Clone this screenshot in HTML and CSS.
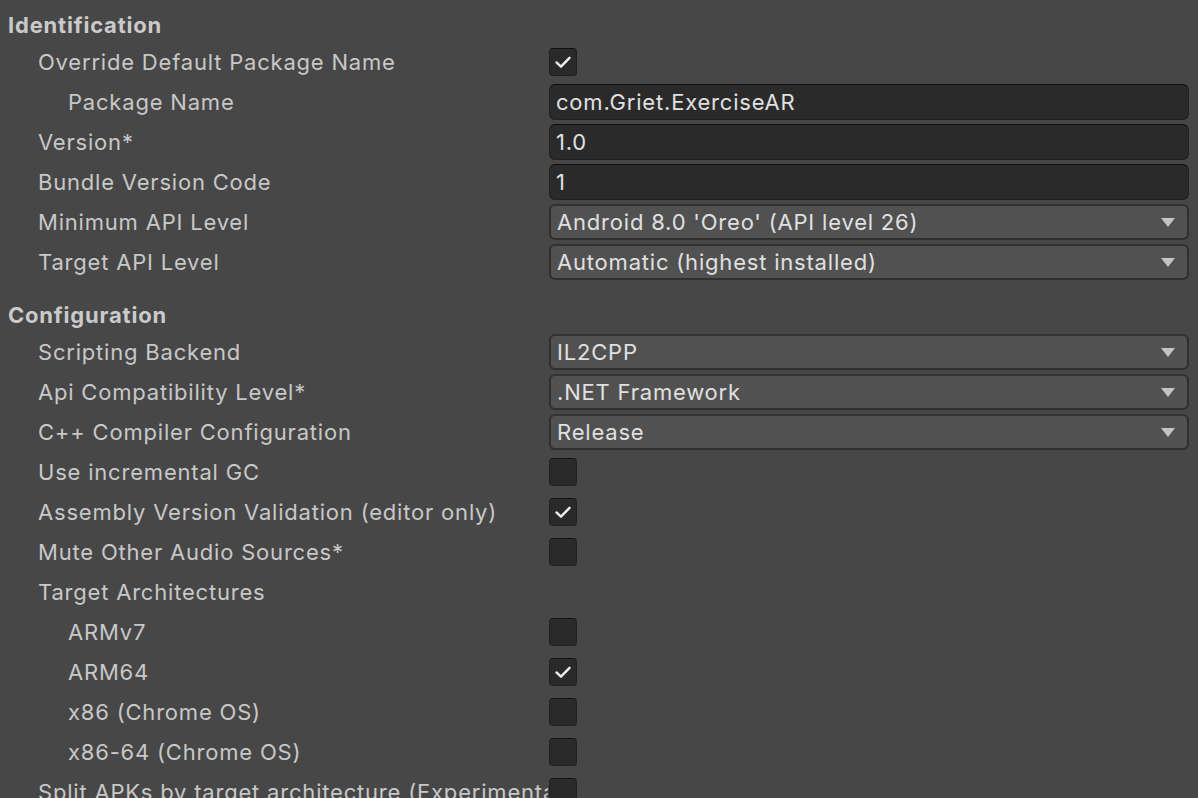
FILE: index.html
```html
<!DOCTYPE html>
<html>
<head>
<meta charset="utf-8">
<link rel="stylesheet" href="styles.css">
</head>
<body>
<div class="inspector">
  <section class="section">
    <div class="header">Identification</div>
    <div class="row"><div class="label l1">Override Default Package Name</div><div class="ctrl"><span class="cb on"><svg viewBox="0 0 28 28"><path d="M7 14.5 L11.8 19 L21 9.5"/></svg></span></div></div>
    <div class="row"><div class="label l2">Package Name</div><div class="ctrl"><div class="field">com.Griet.ExerciseAR</div></div></div>
    <div class="row"><div class="label l1">Version*</div><div class="ctrl"><div class="field">1.0</div></div></div>
    <div class="row"><div class="label l1">Bundle Version Code</div><div class="ctrl"><div class="field">1</div></div></div>
    <div class="row"><div class="label l1">Minimum API Level</div><div class="ctrl"><div class="dropdown"><span>Android 8.0 'Oreo' (API level 26)</span><i class="arrow"></i></div></div></div>
    <div class="row"><div class="label l1">Target API Level</div><div class="ctrl"><div class="dropdown"><span>Automatic (highest installed)</span><i class="arrow"></i></div></div></div>
  </section>
  <section class="section">
    <div class="header">Configuration</div>
    <div class="row"><div class="label l1">Scripting Backend</div><div class="ctrl"><div class="dropdown"><span>IL2CPP</span><i class="arrow"></i></div></div></div>
    <div class="row"><div class="label l1">Api Compatibility Level*</div><div class="ctrl"><div class="dropdown"><span>.NET Framework</span><i class="arrow"></i></div></div></div>
    <div class="row"><div class="label l1">C++ Compiler Configuration</div><div class="ctrl"><div class="dropdown"><span>Release</span><i class="arrow"></i></div></div></div>
    <div class="row"><div class="label l1">Use incremental GC</div><div class="ctrl"><span class="cb"></span></div></div>
    <div class="row"><div class="label l1">Assembly Version Validation (editor only)</div><div class="ctrl"><span class="cb on"><svg viewBox="0 0 28 28"><path d="M7 14.5 L11.8 19 L21 9.5"/></svg></span></div></div>
    <div class="row"><div class="label l1">Mute Other Audio Sources*</div><div class="ctrl"><span class="cb"></span></div></div>
    <div class="row"><div class="label l1">Target Architectures</div><div class="ctrl"></div></div>
    <div class="row"><div class="label l2">ARMv7</div><div class="ctrl"><span class="cb"></span></div></div>
    <div class="row"><div class="label l2">ARM64</div><div class="ctrl"><span class="cb on"><svg viewBox="0 0 28 28"><path d="M7 14.5 L11.8 19 L21 9.5"/></svg></span></div></div>
    <div class="row"><div class="label l2">x86 (Chrome OS)</div><div class="ctrl"><span class="cb"></span></div></div>
    <div class="row"><div class="label l2">x86-64 (Chrome OS)</div><div class="ctrl"><span class="cb"></span></div></div>
    <div class="row"><div class="label l1">Split APKs by target architecture (Experimental)</div><div class="ctrl"><span class="cb"></span></div></div>
  </section>
</div>
</body>
</html>
```

FILE: styles.css
```css
html, body {
  margin: 0;
  padding: 0;
  background: #474747;
  height: 100%;
  overflow: hidden;
}
body {
  font-family: Inter, "Noto Sans", sans-serif;
  font-size: 22px;
  letter-spacing: 0.8px;
  color: #c8c8c8;
}
.inspector {
  display: flex;
  flex-direction: column;
  gap: 16px;
  padding-top: 8px;
}
.section {
  display: flex;
  flex-direction: column;
}
.header {
  height: 34px;
  line-height: 34px;
  padding-left: 8px;
  font-weight: 700;
  letter-spacing: 0.8px;
  color: #cacaca;
}
.row {
  display: flex;
  align-items: center;
  height: 40px;
}
.label {
  width: 548px;
  flex: none;
  white-space: nowrap;
  overflow: hidden;
  box-sizing: border-box;
  line-height: 40px;
}
.l1 { padding-left: 38px; }
.l2 { padding-left: 68px; }
.ctrl {
  flex: 1;
  margin-left: 1px;
  margin-right: 9px;
  display: flex;
  align-items: center;
}
.field {
  flex: 1;
  height: 36px;
  box-sizing: border-box;
  background: #2a2a2a;
  border: 1px solid #212121;
  border-top-color: #0f0f0f;
  border-radius: 6px;
  padding-left: 6px;
  line-height: 34px;
  color: #e0e0e0;
}
.dropdown {
  flex: 1;
  height: 36px;
  box-sizing: border-box;
  background: #515151;
  border: 2px solid #2f2f2f;
  border-top-color: #333333;
  border-radius: 6px;
  padding-left: 6px;
  padding-right: 12px;
  display: flex;
  align-items: center;
  justify-content: space-between;
  color: #e0e0e0;
}
.dropdown span { line-height: 32px; }
.arrow {
  width: 0;
  height: 0;
  border-left: 7px solid transparent;
  border-right: 7px solid transparent;
  border-top: 9px solid #c4c4c4;
}
.cb {
  width: 28px;
  height: 28px;
  box-sizing: border-box;
  background: #2a2a2a;
  border: 1px solid #202020;
  border-top-color: #121212;
  border-radius: 4px;
  display: flex;
}
.cb svg {
  width: 26px;
  height: 26px;
}
.cb path {
  fill: none;
  stroke: #eeeeee;
  stroke-width: 2.6;
  stroke-linecap: round;
  stroke-linejoin: round;
}
```
